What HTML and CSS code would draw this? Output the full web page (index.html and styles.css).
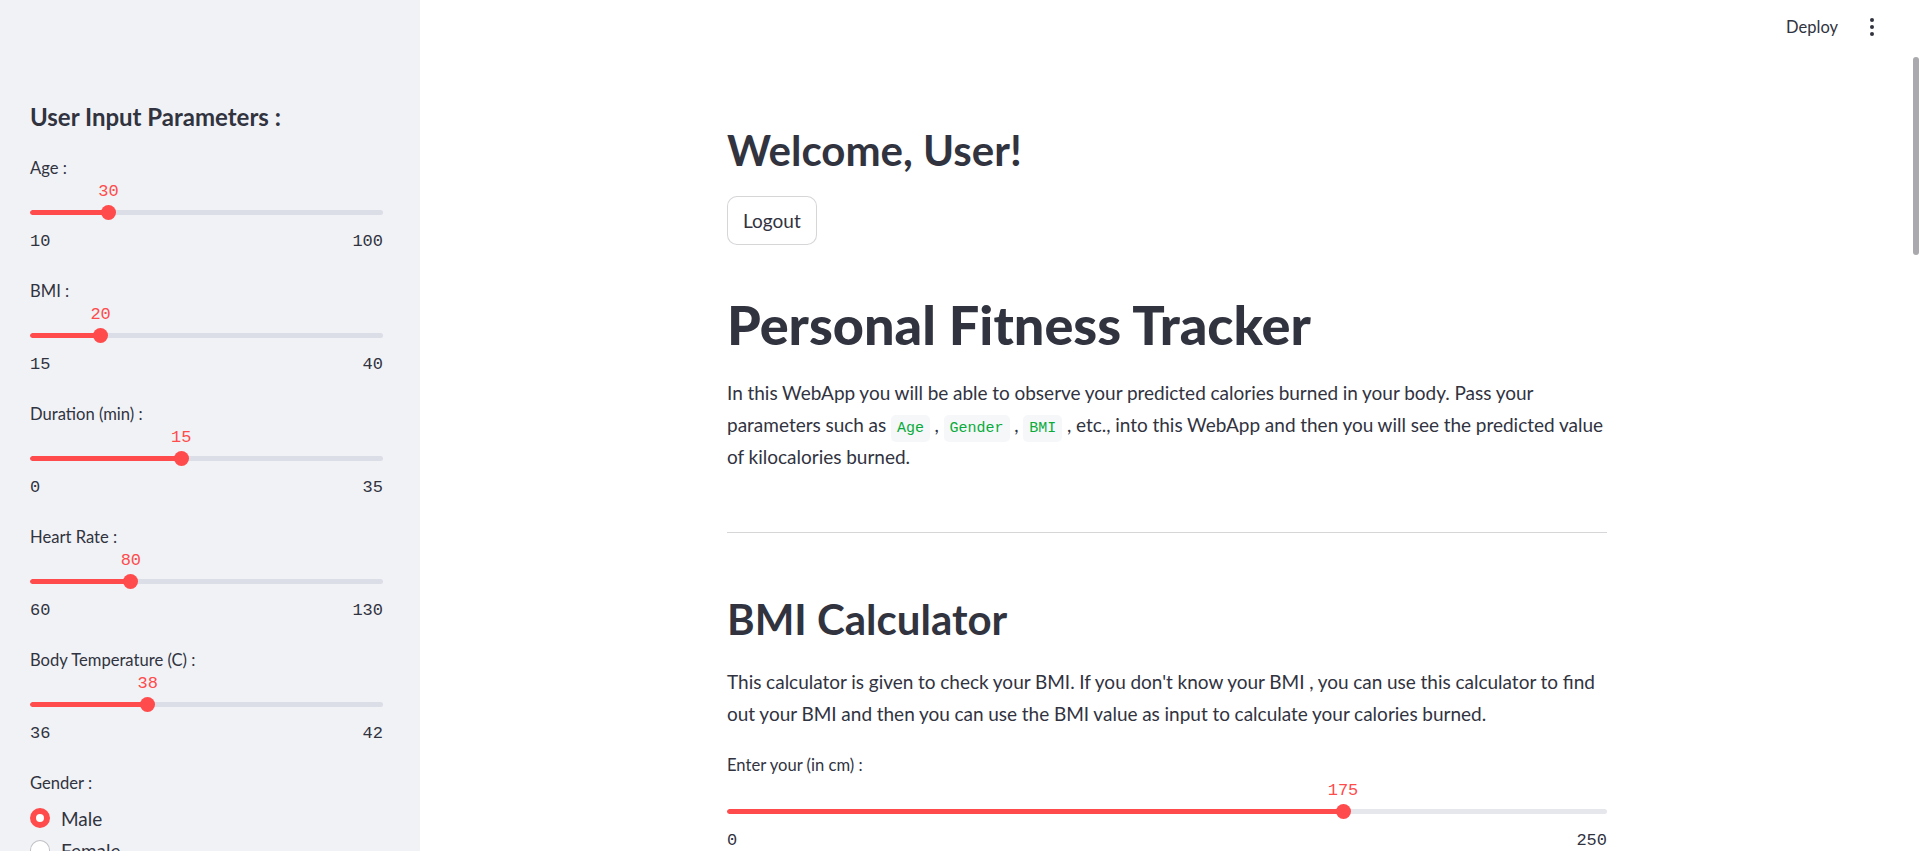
FILE: index.html
```html
<!DOCTYPE html>
<html lang="en">
<head>
<meta charset="utf-8">
<title>Personal Fitness Tracker</title>
<link rel="stylesheet" href="styles.css">
</head>
<body>
<div class="app">
  <aside class="sidebar">
    <h3 class="side-title">User Input Parameters :</h3>

    <div class="slider" style="--p:22.222%">
      <div class="slider-label">Age :</div>
      <div class="slider-body">
        <div class="slider-track"><div class="slider-fill"></div></div>
        <div class="slider-thumb"><span class="slider-value">30</span></div>
      </div>
      <div class="slider-ticks"><span>10</span><span>100</span></div>
    </div>

    <div class="slider" style="--p:20%">
      <div class="slider-label">BMI :</div>
      <div class="slider-body">
        <div class="slider-track"><div class="slider-fill"></div></div>
        <div class="slider-thumb"><span class="slider-value">20</span></div>
      </div>
      <div class="slider-ticks"><span>15</span><span>40</span></div>
    </div>

    <div class="slider" style="--p:42.857%">
      <div class="slider-label">Duration (min) :</div>
      <div class="slider-body">
        <div class="slider-track"><div class="slider-fill"></div></div>
        <div class="slider-thumb"><span class="slider-value">15</span></div>
      </div>
      <div class="slider-ticks"><span>0</span><span>35</span></div>
    </div>

    <div class="slider" style="--p:28.571%">
      <div class="slider-label">Heart Rate :</div>
      <div class="slider-body">
        <div class="slider-track"><div class="slider-fill"></div></div>
        <div class="slider-thumb"><span class="slider-value">80</span></div>
      </div>
      <div class="slider-ticks"><span>60</span><span>130</span></div>
    </div>

    <div class="slider" style="--p:33.333%">
      <div class="slider-label">Body Temperature (C) :</div>
      <div class="slider-body">
        <div class="slider-track"><div class="slider-fill"></div></div>
        <div class="slider-thumb"><span class="slider-value">38</span></div>
      </div>
      <div class="slider-ticks"><span>36</span><span>42</span></div>
    </div>

    <div class="radio-group">
      <div class="slider-label">Gender :</div>
      <div class="radio-options">
        <label class="radio-option"><span class="radio-dot checked"></span><span>Male</span></label>
        <label class="radio-option"><span class="radio-dot"></span><span>Female</span></label>
      </div>
    </div>
  </aside>

  <main class="main">
    <header class="topbar">
      <span class="deploy">Deploy</span>
      <span class="kebab">
        <svg width="4" height="18" viewBox="0 0 4 18"><circle cx="2" cy="2" r="2"/><circle cx="2" cy="9" r="2"/><circle cx="2" cy="16" r="2"/></svg>
      </span>
    </header>

    <div class="block">
      <h2 class="welcome">Welcome, User!</h2>
      <button class="btn">Logout</button>
      <h1 class="title">Personal Fitness Tracker</h1>
      <p class="para intro">In this WebApp you will be able to observe your predicted calories burned in your body. Pass your parameters such as <code>Age</code> , <code>Gender</code> , <code>BMI</code> , etc., into this WebApp and then you will see the predicted value of kilocalories burned.</p>
      <hr class="divider">
      <h2 class="section">BMI Calculator</h2>
      <p class="para calc">This calculator is given to check your BMI. If you don't know your BMI , you can use this calculator to find out your BMI and then you can use the BMI value as input to calculate your calories burned.</p>

      <div class="slider main-slider" style="--p:70%">
        <div class="slider-label">Enter your (in cm) :</div>
        <div class="slider-body">
          <div class="slider-track"><div class="slider-fill"></div></div>
          <div class="slider-thumb"><span class="slider-value">175</span></div>
        </div>
        <div class="slider-ticks"><span>0</span><span>250</span></div>
      </div>
    </div>

    <div class="scroll-thumb"></div>
  </main>
</div>
</body>
</html>
```

FILE: styles.css
```css
html, body {
  margin: 0;
  padding: 0;
  height: 100%;
  overflow: hidden;
}

body {
  font-family: Lato, "Noto Sans", sans-serif;
  color: #31333f;
  background: #ffffff;
}

.app {
  display: flex;
  width: 1919px;
  height: 851px;
}

/* Sidebar */
.sidebar {
  width: 420px;
  flex: 0 0 420px;
  box-sizing: border-box;
  padding: 102px 37px 0 30px;
  background: #f0f2f6;
  overflow: hidden;
}

.side-title {
  margin: 0 0 25px 0;
  font-size: 24px;
  line-height: 30px;
  font-weight: 700;
}

.slider {
  margin-bottom: 26px;
}

.slider-label {
  height: 22px;
  line-height: 22px;
  font-size: 16.6px;
}

.slider-body {
  position: relative;
  margin-top: 26px;
  height: 16px;
}

.slider-track {
  position: absolute;
  left: 0;
  right: 0;
  top: 5px;
  height: 5px;
  border-radius: 3px;
  background: rgba(172, 177, 195, 0.3);
  overflow: hidden;
}

.slider-fill {
  width: var(--p);
  height: 100%;
  background: #ff4b4b;
  border-radius: 3px;
}

.slider-thumb {
  position: absolute;
  left: var(--p);
  top: 0;
  width: 15px;
  height: 15px;
  margin-left: -7.5px;
  border-radius: 50%;
  background: #ff4b4b;
}

.slider-value {
  position: absolute;
  left: 50%;
  top: -25px;
  transform: translateX(-50%);
  line-height: 24px;
  font-family: "Liberation Mono", "DejaVu Sans Mono", monospace;
  font-size: 17px;
  color: #ff4b4b;
  white-space: nowrap;
}

.slider-ticks {
  display: flex;
  justify-content: space-between;
  margin-top: 9px;
  line-height: 24px;
  font-family: "Liberation Mono", "DejaVu Sans Mono", monospace;
  font-size: 17px;
  color: #31333f;
}

.radio-options {
  margin-top: 8px;
}

.radio-option {
  display: flex;
  align-items: center;
  gap: 11px;
  height: 32px;
  font-size: 19px;
}

.radio-dot {
  width: 20px;
  height: 20px;
  box-sizing: border-box;
  border-radius: 50%;
  border: 1px solid rgba(49, 51, 63, 0.3);
  background: #ffffff;
}

.radio-dot.checked {
  border: 6px solid #ff4b4b;
}

/* Main */
.main {
  position: relative;
  flex: 1;
  overflow: hidden;
}

.topbar {
  display: flex;
  align-items: center;
  justify-content: flex-end;
  height: 54px;
  padding-right: 41px;
  gap: 28px;
}

.deploy {
  font-size: 16.5px;
}

.kebab {
  display: flex;
  align-items: center;
  justify-content: center;
  width: 12px;
  height: 20px;
}

.kebab svg {
  fill: #31333f;
}

.block {
  width: 880px;
  margin-left: 307px;
  padding-top: 69px;
}

.welcome {
  margin: 0;
  font-size: 42px;
  line-height: 54px;
  font-weight: 700;
}

.btn {
  display: inline-flex;
  align-items: center;
  margin-top: 19px;
  height: 49px;
  padding: 0 15px;
  border: 1px solid rgba(49, 51, 63, 0.2);
  border-radius: 10px;
  background: #ffffff;
  font-family: inherit;
  font-size: 19px;
  color: #31333f;
}

.title {
  margin: 47px 0 0 0;
  font-size: 54px;
  line-height: 66px;
  font-weight: 900;
}

.para {
  margin: 19px 0 0 0;
  font-size: 19px;
  line-height: 32px;
  word-spacing: -0.2px;
}

.para code {
  font-family: "Liberation Mono", "DejaVu Sans Mono", monospace;
  font-size: 15px;
  line-height: 1;
  color: #09ab3b;
  background: #f6f7f9;
  border-radius: 5px;
  padding: 5px 6px;
}

.divider {
  margin: 59px 0 0 0;
  border: none;
  height: 1px;
  background: rgba(49, 51, 63, 0.2);
}

.section {
  margin: 59px 0 0 0;
  font-size: 42px;
  line-height: 54px;
  font-weight: 700;
}

.para.calc {
  margin-top: 20px;
}

.main-slider {
  margin-top: 24px;
}

.main-slider .slider-body {
  margin-top: 28px;
}

.scroll-thumb {
  position: absolute;
  right: 0;
  top: 57px;
  width: 6px;
  height: 198px;
  border-radius: 3px;
  background: #a9a9ae;
}
```
